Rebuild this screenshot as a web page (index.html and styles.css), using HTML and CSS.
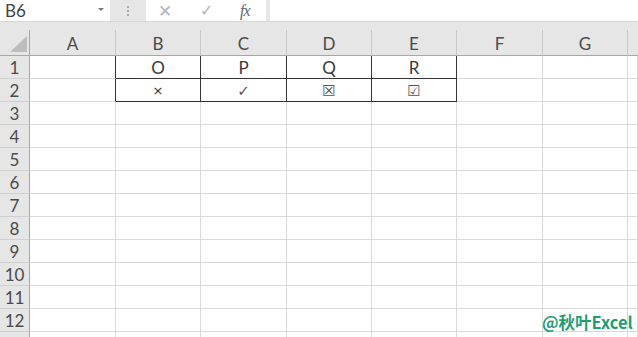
FILE: index.html
```html
<!DOCTYPE html>
<html>
<head>
<meta charset="utf-8">
<link rel="stylesheet" href="styles.css">
</head>
<body>
<div class="app">
  <div class="fbar">
    <div class="namebox"><span class="nm">B6</span><span class="arrow"></span></div>
    <div class="grip"><i></i><i></i><i></i></div>
    <div class="tools">
      <span class="tool x">✕</span>
      <span class="tool ok">✓</span>
      <span class="tool fx">fx</span>
    </div>
    <div class="input"></div>
  </div>
  <div class="sheet">
    <div class="hd corner"><span class="tri"></span></div>
    <div class="hd col">A</div>
    <div class="hd col">B</div>
    <div class="hd col">C</div>
    <div class="hd col">D</div>
    <div class="hd col">E</div>
    <div class="hd col">F</div>
    <div class="hd col">G</div>
    <div class="hd col last"></div>

    <div class="rh">1</div>
    <div class="c tl"></div>
    <div class="c t">O</div>
    <div class="c t">P</div>
    <div class="c t">Q</div>
    <div class="c t">R</div>
    <div class="c"></div>
    <div class="c"></div>
    <div class="c"></div>

    <div class="rh">2</div>
    <div class="c tl"></div>
    <div class="c t sym times">×</div>
    <div class="c t sym tick">✓</div>
    <div class="c t sym box">☒</div>
    <div class="c t sym box">☑</div>
    <div class="c"></div>
    <div class="c"></div>
    <div class="c"></div>

    <div class="rh">3</div><div class="c"></div><div class="c"></div><div class="c"></div><div class="c"></div><div class="c"></div><div class="c"></div><div class="c"></div><div class="c"></div>
    <div class="rh">4</div><div class="c"></div><div class="c"></div><div class="c"></div><div class="c"></div><div class="c"></div><div class="c"></div><div class="c"></div><div class="c"></div>
    <div class="rh">5</div><div class="c"></div><div class="c"></div><div class="c"></div><div class="c"></div><div class="c"></div><div class="c"></div><div class="c"></div><div class="c"></div>
    <div class="rh">6</div><div class="c"></div><div class="c"></div><div class="c"></div><div class="c"></div><div class="c"></div><div class="c"></div><div class="c"></div><div class="c"></div>
    <div class="rh">7</div><div class="c"></div><div class="c"></div><div class="c"></div><div class="c"></div><div class="c"></div><div class="c"></div><div class="c"></div><div class="c"></div>
    <div class="rh">8</div><div class="c"></div><div class="c"></div><div class="c"></div><div class="c"></div><div class="c"></div><div class="c"></div><div class="c"></div><div class="c"></div>
    <div class="rh">9</div><div class="c"></div><div class="c"></div><div class="c"></div><div class="c"></div><div class="c"></div><div class="c"></div><div class="c"></div><div class="c"></div>
    <div class="rh">10</div><div class="c"></div><div class="c"></div><div class="c"></div><div class="c"></div><div class="c"></div><div class="c"></div><div class="c"></div><div class="c"></div>
    <div class="rh">11</div><div class="c"></div><div class="c"></div><div class="c"></div><div class="c"></div><div class="c"></div><div class="c"></div><div class="c"></div><div class="c"></div>
    <div class="rh">12</div><div class="c"></div><div class="c"></div><div class="c"></div><div class="c"></div><div class="c"></div><div class="c"></div><div class="c"></div><div class="c"></div>
    <div class="rh"></div><div class="c"></div><div class="c"></div><div class="c"></div><div class="c"></div><div class="c"></div><div class="c"></div><div class="c"></div><div class="c"></div>
  </div>
  <div class="mark">@秋叶Excel</div>
</div>
</body>
</html>
```
FILE: styles.css
```css
* { box-sizing: border-box; }
html, body { margin: 0; padding: 0; }
body {
  width: 638px; height: 337px; overflow: hidden;
  font-family: "Lato", "Noto Sans", sans-serif;
  background: #e6e6e6;
}
.app { position: relative; width: 638px; height: 337px; overflow: hidden; background: #e6e6e6; }

.fbar {
  display: flex; height: 22px;
  border-bottom: 1px solid #d6d6d6;
}
.namebox {
  width: 110px; background: #fff; display: flex; align-items: center;
  justify-content: space-between; padding: 0 6px 0 5px;
}
.nm { font-size: 17px; color: #444; }
.arrow {
  width: 0; height: 0; margin-bottom: 3px;
  border-left: 3px solid transparent; border-right: 3px solid transparent;
  border-top: 3px solid #777;
}
.grip {
  width: 36px; display: flex; flex-direction: column; align-items: center;
  justify-content: center; gap: 2px;
}
.grip i { display: block; width: 2px; height: 2px; background: #aaa; }
.tools {
  width: 120px; background: #fff; display: flex; align-items: center;
  padding-left: 12px;
}
.tool { color: #b5b5b5; font-family: "DejaVu Sans", sans-serif; font-size: 15px; }
.x { width: 42px; font-size: 17px; }
.ok { width: 40px; font-size: 16px; }
.fx { color: #666; font-family: "Liberation Serif", serif; font-style: italic; font-size: 16px; letter-spacing: -1px; }
.input { flex: 1; margin-left: 4px; background: #fff; }

.sheet {
  margin-top: 8px;
  display: grid;
  grid-template-columns: 30px 86px 85px 86px 85px 85px 86px 85px 1fr;
  grid-template-rows: 26px repeat(13, 23px);
  background: #fff;
}
.hd {
  background: #e6e6e6; border-bottom: 1px solid #a6a6a6;
  display: flex; align-items: center; justify-content: center;
  font-size: 17px; color: #4a4a4a; padding-top: 2px;
}
.col { border-right: 1px solid #c8c8c8; }
.col.last { border-right: none; }
.corner { border-right: 1px solid #a6a6a6; position: relative; }
.tri {
  position: absolute; right: 2px; bottom: 3px; width: 17px; height: 16px;
  background: #bdbdbd; clip-path: polygon(100% 0, 100% 100%, 0 100%);
}
.rh {
  background: #e6e6e6; border-right: 1px solid #a6a6a6; border-bottom: 1px solid #d0d0d0;
  display: flex; align-items: center; justify-content: center;
  font-size: 17px; color: #4a4a4a; padding-top: 1px;
}
.c {
  border-right: 1px solid #dadada; border-bottom: 1px solid #dadada;
  display: flex; align-items: center; justify-content: center;
  font-size: 17px; color: #3a3a3a; padding-top: 1px;
}
.c.tl { border-right-color: #333; }
.c.t { border-right-color: #333; border-bottom-color: #333; }
.sym { font-family: "DejaVu Sans", sans-serif; color: #333; }
.times { font-size: 13px; }
.tick { font-size: 15px; color: #555; }
.box { font-size: 15px; color: #555; }

.mark {
  position: absolute; left: 542px; top: 310px;
  font-family: "Noto Sans CJK SC", "Noto Sans", sans-serif;
  font-weight: 700; font-size: 16.5px; color: #1f9e73;
}
```
